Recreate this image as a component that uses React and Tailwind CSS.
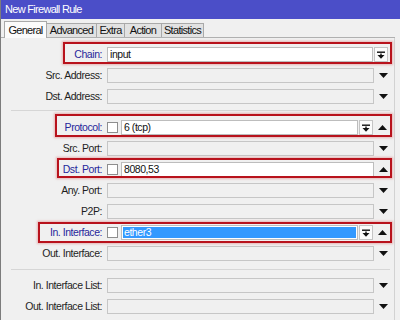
import React from "react";

const FONT = { fontFamily: '"Liberation Sans", Arial, sans-serif' };

function Down() {
  return (
    <svg width="9" height="5" viewBox="0 0 9 5">
      <path d="M0 0H9L4.5 5Z" fill="#111" />
    </svg>
  );
}
function Up() {
  return (
    <svg width="9" height="5" viewBox="0 0 9 5">
      <path d="M0 5H9L4.5 0Z" fill="#111" />
    </svg>
  );
}
function SelBtn() {
  return (
    <div className="w-[14px] h-[15px] border border-[#c4c4c4] bg-[#fbfbfb] flex items-center justify-center">
      <svg width="8" height="8" viewBox="0 0 8 8">
        <rect x="0" y="0.5" width="8" height="1.4" fill="#111" />
        <rect x="3.3" y="2.5" width="1.4" height="2" fill="#111" />
        <path d="M0.5 4H7.5L4 7.8Z" fill="#111" />
      </svg>
    </div>
  );
}

function Label({ text, hl }) {
  return (
    <div
      className={
        "w-[101px] shrink-0 text-right text-[10.5px] tracking-[-0.45px] leading-none " +
        (hl ? "text-[#27279b]" : "text-[#1e1e1e]")
      }
    >
      {text}
    </div>
  );
}

function Check() {
  return <div className="w-[11px] h-[11px] shrink-0 border border-[#8e8e8e] bg-white ml-[5px]" />;
}

function EmptyRow({ label }) {
  return (
    <div className="flex items-center h-[21px]">
      <Label text={label} />
      <div className="ml-[5px] w-[267px] h-[15px] border border-[#c6c6c6] bg-[#f0f0f0]" />
      <div className="w-[18px] flex justify-center">
        <Down />
      </div>
    </div>
  );
}

function RedBox({ left, top, height }) {
  return (
    <div
      className="absolute border-[2px] border-[#b8121c] shadow-[0_0_2px_1px_rgba(220,120,120,0.5)] pointer-events-none"
      style={{ left, top, width: 391 - left, height }}
    />
  );
}

const TABS = [
  ["Advanced", "w-[50px]"],
  ["Extra", "w-[28px]"],
  ["Action", "w-[37px]"],
  ["Statistics", "w-[42px]"],
];

export default function App() {
  return (
    <div
      className="w-[400px] h-[320px] overflow-hidden bg-[#f0f0f0] border-l border-[#7c7c7c] relative"
      style={FONT}
    >
      {/* title bar */}
      <div className="h-[19px] bg-[#4b4ec8] flex items-center pl-[4px] text-white text-[11px] tracking-[-0.7px]">
        New Firewall Rule
      </div>

      {/* tabs */}
      <div className="h-[19px] flex items-end pl-[3px] relative">
        <div className="absolute left-0 right-[5px] bottom-0 h-px bg-[#b0b0b0]" />
        <div className="relative w-[43px] h-[17px] flex items-center justify-center bg-[#fbfbfb] border border-b-0 border-[#a9a9a9] text-[11px] tracking-[-0.7px] text-[#111] z-10">
          General
        </div>
        {TABS.map(([t, w]) => (
          <div
            key={t}
            className={
              w +
              " h-[15px] flex items-center justify-center bg-[#e2e2e2] border border-l-0 border-[#a9a9a9] text-[11px] tracking-[-0.7px] text-[#111]"
            }
          >
            {t}
          </div>
        ))}
      </div>

      {/* form */}
      <div className="relative pt-[6px] mr-[5px] border-r border-[#d2d2d2] h-[282px]">
        {/* Chain */}
        <div className="flex items-center h-[21px]">
          <Label text="Chain:" hl />
          <div className="ml-[5px] w-[266px] h-[15px] border border-[#bdbdbd] bg-white flex items-center pl-[2px] text-[10.5px] tracking-[-0.45px] text-[#111]">
            input
          </div>
          <div className="ml-[1px]">
            <SelBtn />
          </div>
        </div>
        <EmptyRow label="Src. Address:" />
        <EmptyRow label="Dst. Address:" />

        <div className="pt-[3px] pb-[6px] pl-[10px] pr-[4px]">
          <div className="h-px bg-[#d6d6d6]" />
        </div>

        {/* Protocol */}
        <div className="flex items-center h-[21px]">
          <Label text="Protocol:" hl />
          <Check />
          <div className="ml-[3px] w-[237px] h-[15px] border border-[#bdbdbd] bg-white flex items-center pl-[2px] text-[10.5px] tracking-[-0.45px] text-[#111]">
            6 (tcp)
          </div>
          <div className="ml-[1px]">
            <SelBtn />
          </div>
          <div className="w-[18px] flex justify-center">
            <Up />
          </div>
        </div>
        <EmptyRow label="Src. Port:" />
        {/* Dst. Port */}
        <div className="flex items-center h-[21px]">
          <Label text="Dst. Port:" hl />
          <Check />
          <div className="ml-[3px] w-[253px] h-[15px] border border-[#bdbdbd] bg-white flex items-center pl-[2px] text-[10.5px] tracking-[-0.45px] text-[#111]">
            8080,53
          </div>
          <div className="w-[18px] flex justify-center">
            <Up />
          </div>
        </div>
        <EmptyRow label="Any. Port:" />
        <EmptyRow label="P2P:" />
        {/* In. Interface */}
        <div className="flex items-center h-[21px]">
          <Label text="In. Interface:" hl />
          <Check />
          <div className="ml-[3px] w-[237px] h-[15px] border border-[#bdbdbd] bg-white p-px">
            <div className="h-full bg-[#3399ff] flex items-center pl-[1px] text-[10.5px] tracking-[-0.45px] text-white">
              ether3
            </div>
          </div>
          <div className="ml-[1px]">
            <SelBtn />
          </div>
          <div className="w-[18px] flex justify-center">
            <Up />
          </div>
        </div>
        <EmptyRow label="Out. Interface:" />

        <div className="pt-[5px] pb-[5px] pl-[10px] pr-[4px]">
          <div className="h-px bg-[#d6d6d6]" />
        </div>

        <EmptyRow label="In. Interface List:" />
        <EmptyRow label="Out. Interface List:" />

        {/* annotations */}
        <RedBox left={62} top={4} height={22} />
        <RedBox left={54} top={76} height={23} />
        <RedBox left={56} top={120} height={20} />
        <RedBox left={37} top={184} height={21} />
      </div>
    </div>
  );
}
